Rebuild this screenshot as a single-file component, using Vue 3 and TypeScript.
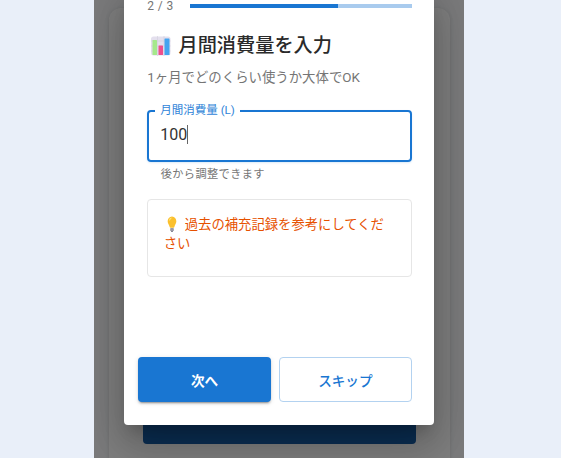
<script setup lang="ts">
const title = '月間消費量を入力'
</script>

<template>
  <div class="page">
    <div class="phone">
      <div class="under-card">
        <div class="under-spacer"></div>
        <div class="under-button"></div>
      </div>
      <div class="scrim"></div>
      <div class="modal-wrap">
        <div class="modal">
          <div class="progress-row">
            <span class="step">2 / 3</span>
            <div class="track"><div class="fill"></div></div>
          </div>
          <h2 class="title">
            <svg class="chart" width="20" height="20" viewBox="0 0 20 20" aria-hidden="true">
              <rect x="0" y="0.5" width="19.5" height="19" rx="2.5" fill="#e4e0ee" />
              <path d="M0 5h19.5M0 10h19.5M0 15h19.5M6.5 0v20M13 0v20" stroke="#d2cfdc" stroke-width=".6" />
              <rect x="1.5" y="4" width="4.5" height="15" rx=".6" fill="#a5e88c" />
              <rect x="7.5" y="9.5" width="4.5" height="9.5" rx=".6" fill="#ee4f8c" />
              <rect x="13.5" y="2.5" width="5" height="16.5" rx=".6" fill="#45a4f0" />
            </svg>
            <span>{{ title }}</span>
          </h2>
          <p class="sub">1ヶ月でどのくらい使うか大体でOK</p>
          <div class="field">
            <span class="legend">月間消費量 (L)</span>
            <span class="value">100</span><span class="caret"></span>
          </div>
          <p class="helper">後から調整できます</p>
          <div class="tip">
            <svg class="bulb" width="10" height="17" viewBox="0 0 12 18" preserveAspectRatio="none" aria-hidden="true">
              <path d="M6 .5C2.9.5.8 2.8.8 5.6c0 2.4 1.7 3.6 2.3 5.8.2.7.5 1 1 1h3.8c.5 0 .8-.3 1-1 .6-2.2 2.3-3.4 2.3-5.8C11.2 2.8 9.1.5 6 .5z" fill="#fbc02d" />
              <path d="M3 2.8C4 1.8 5.5 1.6 6.5 1.8 4.8 2.6 3.8 3.6 3.4 5.2 2.8 4.6 2.6 3.6 3 2.8z" fill="#ffe98a" />
              <rect x="3.8" y="12.6" width="4.4" height="3.4" rx="1" fill="#9a9aa6" />
              <rect x="4.8" y="16" width="2.4" height="1" rx=".5" fill="#6f6f7c" />
            </svg>
            <span class="tip-text">過去の補充記録を参考にしてください</span>
          </div>
          <div class="actions">
            <button class="primary">次へ</button>
            <button class="secondary">スキップ</button>
          </div>
        </div>
      </div>
    </div>
  </div>
</template>

<style>
html, body { margin: 0; padding: 0; overflow: hidden; }
</style>

<style scoped>
.page {
  width: 561px;
  height: 458px;
  background: #e9eff9;
  display: flex;
  overflow: hidden;
  font-family: Roboto, "Noto Sans CJK JP", sans-serif;
}
.phone {
  position: relative;
  width: 370px;
  height: 458px;
  margin-left: 94px;
  background: #f6f7f9;
  overflow: hidden;
}
.under-card {
  margin: 8px 14px 0 14.5px;
  height: 470px;
  border-radius: 12px;
  background: #fff;
  box-shadow: 0 1px 4px rgba(0,0,0,.12);
  padding: 0 34px;
  display: flex;
  flex-direction: column;
}
.under-spacer { height: 376px; }
.under-button {
  height: 60px;
  background: #165ea9;
  border-radius: 4px;
}
.scrim {
  position: absolute;
  inset: 0;
  background: rgba(0,0,0,.5);
}
.modal-wrap {
  position: absolute;
  left: 30.3px;
  bottom: 33px;
  width: 310px;
}
.modal {
  background: #fff;
  border-radius: 4px;
  box-shadow: 0 11px 15px -7px rgba(0,0,0,.2), 0 24px 38px 3px rgba(0,0,0,.14), 0 9px 46px 8px rgba(0,0,0,.12);
  padding: 0 22.6px 22.7px 13.7px;
  height: 437px;
  box-sizing: border-box;
  display: flex;
  flex-direction: column;
}
.progress-row {
  margin: 12px 0 0 9.3px;
  height: 14px;
  display: flex;
  align-items: center;
  gap: 16px;
}
.step { font-size: 12px; letter-spacing: .4px; color: #757575; line-height: 14px; white-space: nowrap; position: relative; top: -1px; }
.track { flex: 1; height: 4px; background: #a9cbee; position: relative; top: -1px; }
.fill { width: 67%; height: 100%; background: #1976d2; }
.title {
  margin: 17px 0 0 9.3px;
  padding-left: 3.7px;
  font-size: 19.2px;
  font-weight: 500;
  line-height: 30px;
  color: #2a2a2a;
  white-space: nowrap;
  display: flex;
  align-items: center;
  gap: 7.5px;
}
.chart { flex: none; }
.sub { margin: 8px 0 0 9.3px; font-size: 13.4px; line-height: 18px; color: #757575; }
.field {
  margin: 23px 0 0 9.3px;
  height: 52px;
  box-sizing: border-box;
  border: 2px solid #1976d2;
  border-radius: 4px;
  position: relative;
  display: flex;
  align-items: center;
  padding: 0 0 3px 11px;
  font-size: 16px;
  color: #333;
  box-shadow: 0 1px 2px rgba(25,118,210,.15);
}
.legend {
  position: absolute;
  left: 6px;
  top: -9px;
  padding: 0 5px;
  background: #fff;
  font-size: 11.5px;
  line-height: 14px;
  color: #2f84d8;
}
.caret { display: inline-block; width: 1px; height: 19px; background: #666; }
.helper { margin: 4px 0 0 22.7px; font-size: 11.2px; line-height: 18px; letter-spacing: .4px; color: #757575; }
.tip {
  margin: 15px 0 0 9.3px;
  height: 78px;
  box-sizing: border-box;
  border: 1px solid #e6e6e6;
  border-radius: 4px;
  padding: 16px 16px 16px 15.5px;
  font-size: 13.33px;
  line-height: 18.5px;
  color: #e65100;
}
.bulb { width: 10px; height: 17px; vertical-align: -4px; margin: 0 8px 0 3px; }
.actions {
  margin-top: auto;
  display: flex;
  gap: 8px;
}
.actions button {
  height: 45.6px;
  border-radius: 4px;
  font-family: inherit;
  font-size: 13.6px;
  cursor: pointer;
}
.primary {
  width: 133px;
  border: 0;
  background: #1976d2;
  color: #fff;
  font-weight: 700;
  box-shadow: 0 3px 1px -2px rgba(0,0,0,.2), 0 2px 2px 0 rgba(0,0,0,.14), 0 1px 5px 0 rgba(0,0,0,.12);
}
.secondary {
  width: 132.7px;
  border: 1px solid #b3d2f0;
  background: #fff;
  color: #1976d2;
  font-weight: 500;
}
</style>
